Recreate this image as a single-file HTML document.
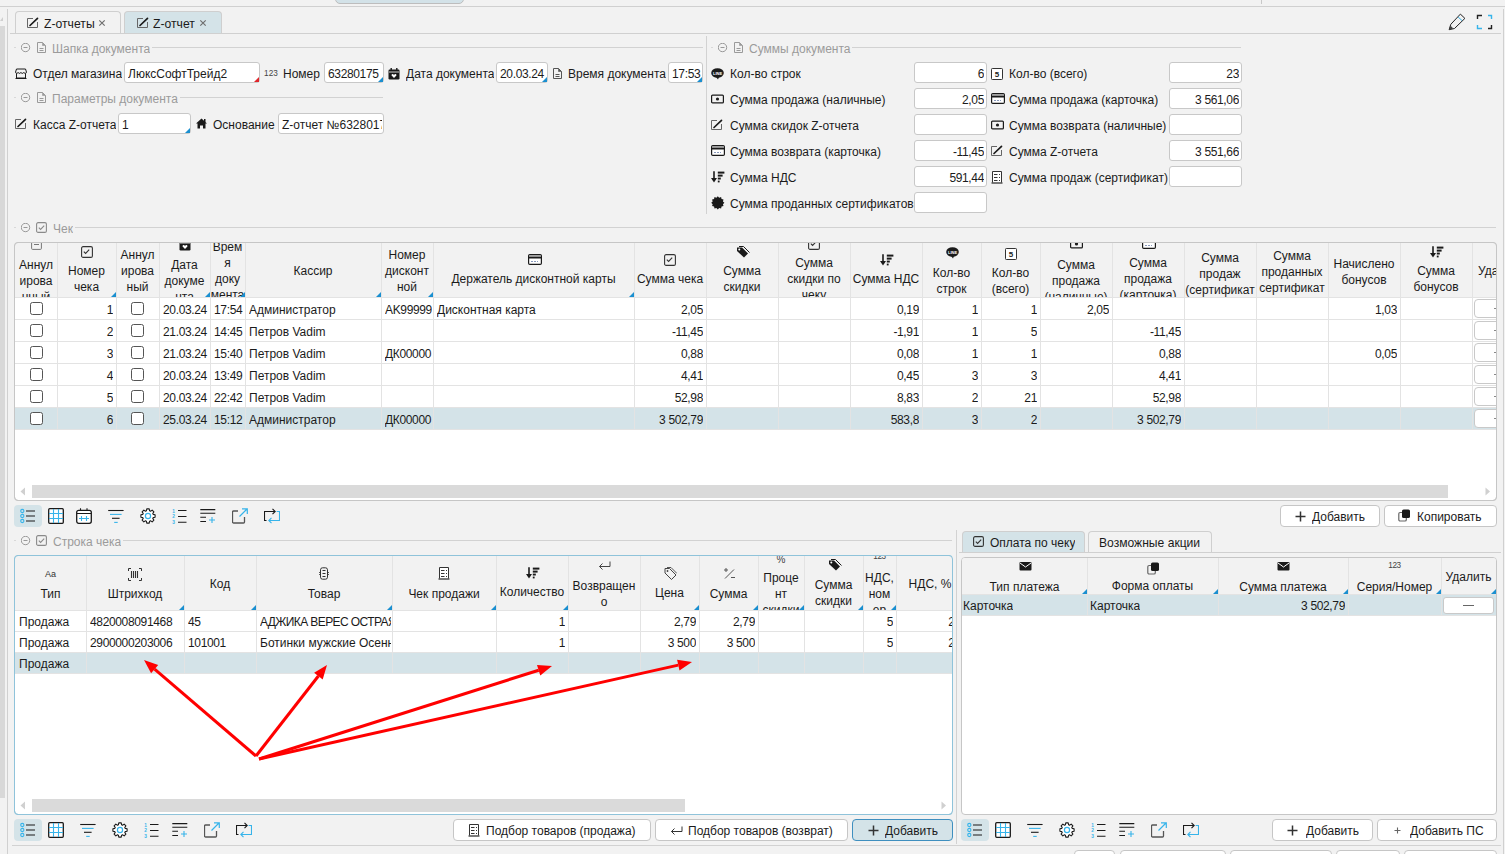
<!DOCTYPE html><html><head><meta charset="utf-8"><style>
*{margin:0;padding:0;box-sizing:border-box}
html,body{width:1505px;height:854px;overflow:hidden;background:#f2f2f2}
body{position:relative;font-family:"Liberation Sans",sans-serif;font-size:12px;color:#1b1b1b}
div,svg{position:absolute}
.t{white-space:nowrap;overflow:hidden}
.inp{background:#fff;border:1px solid #c8c8c8;border-radius:3px}
.btn{background:#fff;border:1px solid #c6c6c6;border-radius:4px}
</style></head><body>
<div style="left:335px;top:-6px;width:129px;height:10px;background:#d3e2e8;border:1px solid #bdbdbd;border-radius:5px"></div><div style="left:0px;top:6px;width:1505px;height:1px;background:#d0d0d0"></div><div style="left:1261px;top:0px;width:1px;height:4px;background:#c8c8c8"></div><div style="left:0px;top:26px;width:5px;height:772px;background:#d8d8d8"></div><svg style="left:0px;top:16px" width="4" height="6" viewBox="0 0 4 6"><path d="M0 5L3 1L3 5Z" fill="#cfcfcf"/></svg><div style="left:7px;top:9px;width:1px;height:845px;background:#d0d0d0"></div><div style="left:1503px;top:9px;width:1px;height:845px;background:#d0d0d0"></div><div style="left:15px;top:11px;width:106px;height:23px;background:#f2f2f2;border:1px solid #cfcfcf;border-bottom:none;border-radius:4px 4px 0 0"></div><div style="left:124px;top:11px;width:98px;height:23px;background:#d4e3e8;border:1px solid #cfcfcf;border-bottom:none;border-radius:4px 4px 0 0"></div><div style="left:10px;top:33px;width:1491px;height:1px;background:#d0d0d0"></div><svg style="left:27px;top:17px" width="12" height="12" viewBox="0 0 12 12"><path d="M6 1.5H0.5V10.5H10.5V5" fill="none" stroke="#666" stroke-width="1"/><path d="M3 8.5L10.5 1.3" stroke="#1a1a1a" stroke-width="1.7" stroke-linecap="round"/></svg><div class="t" style="left:44px;top:16px;height:16px;line-height:16px;font-size:12.2px">Z-отчеты</div><svg style="left:98px;top:19px" width="8" height="8" viewBox="0 0 8 8"><path d="M1.3 1.3L6.7 6.7M6.7 1.3L1.3 6.7" stroke="#6e6e6e" stroke-width="1.15"/></svg><svg style="left:137px;top:17px" width="12" height="12" viewBox="0 0 12 12"><path d="M6 1.5H0.5V10.5H10.5V5" fill="none" stroke="#666" stroke-width="1"/><path d="M3 8.5L10.5 1.3" stroke="#1a1a1a" stroke-width="1.7" stroke-linecap="round"/></svg><div class="t" style="left:153px;top:16px;height:16px;line-height:16px;font-size:12.2px">Z-отчет</div><svg style="left:199px;top:19px" width="8" height="8" viewBox="0 0 8 8"><path d="M1.3 1.3L6.7 6.7M6.7 1.3L1.3 6.7" stroke="#6e6e6e" stroke-width="1.15"/></svg><svg style="left:1448px;top:13px" width="19" height="18" viewBox="0 0 19 18"><path d="M1.1 16.7L2.8 11.3L12.4 1.1L16.9 5.4L6.5 15.5Z" fill="none" stroke="#222" stroke-width="1" stroke-linejoin="miter"/><path d="M10.1 4L14.1 7.6" stroke="#37b4ea" stroke-width="1"/><path d="M1.1 16.7L2.4 12.6L5.3 15.5Z" fill="#444"/></svg><svg style="left:1476px;top:13px" width="18" height="18" viewBox="0 0 18 18"><path d="M1.5 6V2.5H6" fill="none" stroke="#222" stroke-width="1.4"/><path d="M12 2.5H15.5V6" fill="none" stroke="#37b4ea" stroke-width="1.4"/><path d="M1.5 12V15.5H6" fill="none" stroke="#37b4ea" stroke-width="1.4"/><path d="M12 15.5H15.5V12" fill="none" stroke="#222" stroke-width="1.4"/></svg><div style="left:14px;top:47px;width:2px;height:1px;background:#d8d8d8"></div><svg style="left:21px;top:43px" width="10" height="10" viewBox="0 0 10 10"><circle cx="4.5" cy="4.5" r="4.2" fill="none" stroke="#8f8f8f" stroke-width="0.9"/><path d="M2.5 4.5H6.5" stroke="#8f8f8f" stroke-width="0.9"/></svg><svg style="left:36px;top:41px" width="11" height="13" viewBox="0 0 11 13"><path d="M1.5 1.5H6.5L9.5 4.5V11.5H1.5Z" fill="none" stroke="#9a9a9a" stroke-width="1"/><path d="M6.5 1.5V4.5H9.5" fill="#9a9a9a" stroke="#9a9a9a" stroke-width="0.6"/><path d="M3.5 7.5H7.5M3.5 9.5H7.5" stroke="#9a9a9a" stroke-width="1"/></svg><div class="t" style="left:52px;top:41px;height:16px;line-height:16px;color:#9b9b9b">Шапка документа</div><div style="left:152px;top:47px;width:551px;height:1px;background:#d2d2d2"></div><div style="left:711px;top:47px;width:2px;height:1px;background:#d8d8d8"></div><svg style="left:718px;top:43px" width="10" height="10" viewBox="0 0 10 10"><circle cx="4.5" cy="4.5" r="4.2" fill="none" stroke="#8f8f8f" stroke-width="0.9"/><path d="M2.5 4.5H6.5" stroke="#8f8f8f" stroke-width="0.9"/></svg><svg style="left:733px;top:41px" width="11" height="13" viewBox="0 0 11 13"><path d="M1.5 1.5H6.5L9.5 4.5V11.5H1.5Z" fill="none" stroke="#9a9a9a" stroke-width="1"/><path d="M6.5 1.5V4.5H9.5" fill="#9a9a9a" stroke="#9a9a9a" stroke-width="0.6"/><path d="M3.5 7.5H7.5M3.5 9.5H7.5" stroke="#9a9a9a" stroke-width="1"/></svg><div class="t" style="left:749px;top:41px;height:16px;line-height:16px;color:#9b9b9b">Суммы документа</div><div style="left:852px;top:47px;width:389px;height:1px;background:#d2d2d2"></div><div style="left:706px;top:36px;width:1px;height:178px;background:#d2d2d2"></div><svg style="left:15px;top:68px" width="12" height="11" viewBox="0 0 12 11"><path d="M1.5 1H10.5L11.5 4.2C11.5 5 10.8 5.4 10.2 5.4C9.5 5.4 9 5 8.8 4.4C8.6 5 8 5.4 7.3 5.4C6.6 5.4 6.1 5 5.9 4.4C5.7 5 5.2 5.4 4.5 5.4C3.8 5.4 3.3 5 3.1 4.4C2.9 5 2.4 5.4 1.8 5.4C1.2 5.4 0.5 5 0.5 4.2Z" fill="none" stroke="#1a1a1a" stroke-width="1"/><path d="M1.5 5.5V10H10.5V5.5M0.5 10.5H11.5" fill="none" stroke="#1a1a1a" stroke-width="1"/></svg><div class="t" style="left:33px;top:66px;height:16px;line-height:16px;">Отдел магазина</div><div class="inp" style="left:124px;top:62px;width:136px;height:21px"></div><div class="t" style="left:128px;top:66px;height:17px;line-height:17px;width:130px;">ЛюксСофтТрейд2</div><svg style="left:254px;top:77px" width="5" height="5" viewBox="0 0 5 5"><path d="M5 0V5H0Z" fill="#e0262b"/></svg><div class="t" style="left:264px;top:68px;height:12px;line-height:12px;letter-spacing:-0.35px;font-size:8.2px;color:#444;letter-spacing:0.1px">123</div><div class="t" style="left:283px;top:66px;height:16px;line-height:16px;">Номер</div><div class="inp" style="left:324px;top:62px;width:60px;height:21px"></div><div class="t" style="left:328px;top:66px;height:17px;line-height:17px;width:54px;letter-spacing:-0.35px;">63280175</div><svg style="left:378px;top:77px" width="5" height="5" viewBox="0 0 5 5"><path d="M5 0V5H0Z" fill="#1a8fd0"/></svg><svg style="left:388px;top:68px" width="12" height="12" viewBox="0 0 12 12"><rect x="0.5" y="1.5" width="11" height="10" rx="1.2" fill="#1a1a1a"/><rect x="2.5" y="0" width="1.4" height="3" fill="#1a1a1a"/><rect x="8.1" y="0" width="1.4" height="3" fill="#1a1a1a"/><path d="M1 4H11" stroke="#fff" stroke-width="0.8"/><path d="M6 10L3.8 7.8C3.2 7.2 3.6 6 4.6 6C5.2 6 5.6 6.4 6 6.9C6.4 6.4 6.8 6 7.4 6C8.4 6 8.8 7.2 8.2 7.8Z" fill="#fff"/></svg><div class="t" style="left:406px;top:66px;height:16px;line-height:16px;">Дата документа</div><div class="inp" style="left:496px;top:62px;width:52px;height:21px"></div><div class="t" style="left:500px;top:66px;height:17px;line-height:17px;width:46px;letter-spacing:-0.35px;">20.03.24</div><svg style="left:542px;top:77px" width="5" height="5" viewBox="0 0 5 5"><path d="M5 0V5H0Z" fill="#1a8fd0"/></svg><svg style="left:552px;top:67px" width="11" height="13" viewBox="0 0 11 13"><path d="M1.5 1.5H6.5L9.5 4.5V11.5H1.5Z" fill="none" stroke="#555" stroke-width="1"/><path d="M6.5 1.5V4.5H9.5" fill="#555" stroke="#555" stroke-width="0.6"/><path d="M3.5 7.5H7.5M3.5 9.5H7.5" stroke="#555" stroke-width="1"/></svg><div class="t" style="left:568px;top:66px;height:16px;line-height:16px;">Время документа</div><div class="inp" style="left:668px;top:62px;width:35px;height:21px"></div><div class="t" style="left:672px;top:66px;height:17px;line-height:17px;width:29px;letter-spacing:-0.35px;">17:53</div><svg style="left:697px;top:77px" width="5" height="5" viewBox="0 0 5 5"><path d="M5 0V5H0Z" fill="#1a8fd0"/></svg><div style="left:14px;top:97px;width:2px;height:1px;background:#d8d8d8"></div><svg style="left:21px;top:93px" width="10" height="10" viewBox="0 0 10 10"><circle cx="4.5" cy="4.5" r="4.2" fill="none" stroke="#8f8f8f" stroke-width="0.9"/><path d="M2.5 4.5H6.5" stroke="#8f8f8f" stroke-width="0.9"/></svg><svg style="left:36px;top:91px" width="11" height="13" viewBox="0 0 11 13"><path d="M1.5 1.5H6.5L9.5 4.5V11.5H1.5Z" fill="none" stroke="#9a9a9a" stroke-width="1"/><path d="M6.5 1.5V4.5H9.5" fill="#9a9a9a" stroke="#9a9a9a" stroke-width="0.6"/><path d="M3.5 7.5H7.5M3.5 9.5H7.5" stroke="#9a9a9a" stroke-width="1"/></svg><div class="t" style="left:52px;top:91px;height:16px;line-height:16px;color:#9b9b9b">Параметры документа</div><div style="left:180px;top:97px;width:203px;height:1px;background:#d2d2d2"></div><svg style="left:15px;top:118px" width="12" height="12" viewBox="0 0 12 12"><path d="M6 1.5H0.5V10.5H10.5V5" fill="none" stroke="#666" stroke-width="1"/><path d="M3 8.5L10.5 1.3" stroke="#1a1a1a" stroke-width="1.7" stroke-linecap="round"/></svg><div class="t" style="left:33px;top:117px;height:16px;line-height:16px;">Касса Z-отчета</div><div class="inp" style="left:118px;top:113px;width:73px;height:21px"></div><div class="t" style="left:122px;top:117px;height:17px;line-height:17px;width:67px;letter-spacing:-0.35px;">1</div><svg style="left:185px;top:128px" width="5" height="5" viewBox="0 0 5 5"><path d="M5 0V5H0Z" fill="#1a8fd0"/></svg><svg style="left:196px;top:118px" width="11" height="11" viewBox="0 0 11 11"><path d="M5.5 0.5L11 5.5H9.5V10.5H7V7.5H4V10.5H1.5V5.5H0Z" fill="#1a1a1a"/><rect x="8" y="1" width="1.5" height="3" fill="#1a1a1a"/></svg><div class="t" style="left:213px;top:117px;height:16px;line-height:16px;">Основание</div><div class="inp" style="left:278px;top:113px;width:106px;height:21px"></div><div class="t" style="left:282px;top:117px;height:17px;line-height:17px;width:100px;">Z-отчет №63280175</div><svg style="left:711px;top:68px" width="13" height="12" viewBox="0 0 13 12"><ellipse cx="6.5" cy="5" rx="6.3" ry="4.8" fill="#1a1a1a"/><path d="M5 9L7 11.5L8 9Z" fill="#1a1a1a"/><text x="6.5" y="6.6" font-size="4" fill="#fff" text-anchor="middle" font-family="Liberation Sans" font-weight="bold">LINE</text></svg><div class="t" style="left:730px;top:66px;height:16px;line-height:16px;">Кол-во строк</div><div class="inp" style="left:914px;top:62px;width:73px;height:21px"></div><div class="t" style="left:916px;top:66px;height:17px;line-height:17px;width:68px;letter-spacing:-0.35px;text-align:right">6</div><svg style="left:711px;top:94px" width="13" height="10" viewBox="0 0 13 10"><rect x="0.6" y="1.1" width="11.8" height="7.8" rx="1" fill="none" stroke="#1a1a1a" stroke-width="1.2"/><circle cx="6.5" cy="5" r="1.6" fill="#1a1a1a"/></svg><div class="t" style="left:730px;top:92px;height:16px;line-height:16px;">Сумма продажа (наличные)</div><div class="inp" style="left:914px;top:88px;width:73px;height:21px"></div><div class="t" style="left:916px;top:92px;height:17px;line-height:17px;width:68px;letter-spacing:-0.35px;text-align:right">2,05</div><svg style="left:711px;top:119px" width="12" height="12" viewBox="0 0 12 12"><path d="M6 1.5H0.5V10.5H10.5V5" fill="none" stroke="#666" stroke-width="1"/><path d="M3 8.5L10.5 1.3" stroke="#1a1a1a" stroke-width="1.7" stroke-linecap="round"/></svg><div class="t" style="left:730px;top:118px;height:16px;line-height:16px;">Сумма скидок Z-отчета</div><div class="inp" style="left:914px;top:114px;width:73px;height:21px"></div><svg style="left:711px;top:145px" width="14" height="11" viewBox="0 0 14 11"><rect x="0.6" y="0.6" width="12.8" height="9.8" rx="1.2" fill="#fff" stroke="#1a1a1a" stroke-width="1.2"/><rect x="1.2" y="1.2" width="11.6" height="1.6" fill="#999"/><rect x="1" y="2.8" width="12" height="1.7" fill="#1a1a1a"/><path d="M3 7.5H5M6 7.5H8M9 7.5H10" stroke="#8899bb" stroke-width="1"/></svg><div class="t" style="left:730px;top:144px;height:16px;line-height:16px;">Сумма возврата (карточка)</div><div class="inp" style="left:914px;top:140px;width:73px;height:21px"></div><div class="t" style="left:916px;top:144px;height:17px;line-height:17px;width:68px;letter-spacing:-0.35px;text-align:right">-11,45</div><svg style="left:711px;top:171px" width="14" height="12" viewBox="0 0 14 12"><path d="M3 0.3V9" stroke="#1a1a1a" stroke-width="1.6"/><path d="M0 7L3 11.6L6 7Z" fill="#1a1a1a"/><rect x="6.8" y="0.6" width="6.6" height="2" fill="#1a1a1a"/><rect x="6.8" y="3.6" width="4.8" height="2" fill="#1a1a1a"/><rect x="6.8" y="6.6" width="3" height="1.9" fill="#1a1a1a"/><rect x="6.8" y="9.6" width="1.8" height="1.8" fill="#1a1a1a"/></svg><div class="t" style="left:730px;top:170px;height:16px;line-height:16px;">Сумма НДС</div><div class="inp" style="left:914px;top:166px;width:73px;height:21px"></div><div class="t" style="left:916px;top:170px;height:17px;line-height:17px;width:68px;letter-spacing:-0.35px;text-align:right">591,44</div><svg style="left:711px;top:196px" width="14" height="14" viewBox="0 0 14 14"><polygon points="13.40,6.80 11.92,8.17 12.52,10.10 10.55,10.55 10.10,12.52 8.17,11.92 6.80,13.40 5.43,11.92 3.50,12.52 3.05,10.55 1.08,10.10 1.68,8.17 0.20,6.80 1.68,5.43 1.08,3.50 3.05,3.05 3.50,1.08 5.43,1.68 6.80,0.20 8.17,1.68 10.10,1.08 10.55,3.05 12.52,3.50 11.92,5.43" fill="#1a1a1a"/></svg><div class="t" style="left:730px;top:196px;height:16px;line-height:16px;">Сумма проданных сертификатов</div><div class="inp" style="left:914px;top:192px;width:73px;height:21px"></div><svg style="left:991px;top:67px" width="13" height="13" viewBox="0 0 13 13"><rect x="0.5" y="1.5" width="11" height="11" rx="0.8" fill="#fff" stroke="#333" stroke-width="1"/><text x="6" y="9.8" font-size="8" text-anchor="middle" fill="#222" font-family="Liberation Sans" font-weight="bold">5</text></svg><div class="t" style="left:1009px;top:66px;height:16px;line-height:16px;">Кол-во (всего)</div><div class="inp" style="left:1169px;top:62px;width:73px;height:21px"></div><div class="t" style="left:1171px;top:66px;height:17px;line-height:17px;width:68px;letter-spacing:-0.35px;text-align:right">23</div><svg style="left:991px;top:93px" width="14" height="11" viewBox="0 0 14 11"><rect x="0.6" y="0.6" width="12.8" height="9.8" rx="1.2" fill="#fff" stroke="#1a1a1a" stroke-width="1.2"/><rect x="1.2" y="1.2" width="11.6" height="1.6" fill="#999"/><rect x="1" y="2.8" width="12" height="1.7" fill="#1a1a1a"/><path d="M3 7.5H5M6 7.5H8M9 7.5H10" stroke="#8899bb" stroke-width="1"/></svg><div class="t" style="left:1009px;top:92px;height:16px;line-height:16px;">Сумма продажа (карточка)</div><div class="inp" style="left:1169px;top:88px;width:73px;height:21px"></div><div class="t" style="left:1171px;top:92px;height:17px;line-height:17px;width:68px;letter-spacing:-0.35px;text-align:right">3 561,06</div><svg style="left:991px;top:120px" width="13" height="10" viewBox="0 0 13 10"><rect x="0.6" y="1.1" width="11.8" height="7.8" rx="1" fill="none" stroke="#1a1a1a" stroke-width="1.2"/><circle cx="6.5" cy="5" r="1.6" fill="#1a1a1a"/></svg><div class="t" style="left:1009px;top:118px;height:16px;line-height:16px;">Сумма возврата (наличные)</div><div class="inp" style="left:1169px;top:114px;width:73px;height:21px"></div><svg style="left:991px;top:145px" width="12" height="12" viewBox="0 0 12 12"><path d="M6 1.5H0.5V10.5H10.5V5" fill="none" stroke="#666" stroke-width="1"/><path d="M3 8.5L10.5 1.3" stroke="#1a1a1a" stroke-width="1.7" stroke-linecap="round"/></svg><div class="t" style="left:1009px;top:144px;height:16px;line-height:16px;">Сумма Z-отчета</div><div class="inp" style="left:1169px;top:140px;width:73px;height:21px"></div><div class="t" style="left:1171px;top:144px;height:17px;line-height:17px;width:68px;letter-spacing:-0.35px;text-align:right">3 551,66</div><svg style="left:991px;top:171px" width="12" height="13" viewBox="0 0 12 13"><path d="M1.5 11.5V0.5H10.5V11.5" fill="#fff" stroke="#333" stroke-width="1"/><path d="M0.5 12H11.5" stroke="#333" stroke-width="1.3"/><path d="M3 3.5H6.5M8 3.5H9M3 6.5H6.5M8 6.5H9M3 9.5H6.5M8 9.5H9" stroke="#333" stroke-width="1.1"/></svg><div class="t" style="left:1009px;top:170px;height:16px;line-height:16px;">Сумма продаж (сертификат)</div><div class="inp" style="left:1169px;top:166px;width:73px;height:21px"></div><div style="left:14px;top:227px;width:2px;height:1px;background:#d8d8d8"></div><svg style="left:21px;top:223px" width="10" height="10" viewBox="0 0 10 10"><circle cx="4.5" cy="4.5" r="4.2" fill="none" stroke="#8f8f8f" stroke-width="0.9"/><path d="M2.5 4.5H6.5" stroke="#8f8f8f" stroke-width="0.9"/></svg><svg style="left:36px;top:222px" width="11" height="11" viewBox="0 0 11 11"><rect x="0.6" y="0.6" width="9.8" height="9.8" rx="1.5" fill="none" stroke="#8a8a8a" stroke-width="1.1"/><path d="M2.8 5.6L4.6 7.4L8.2 3.6" fill="none" stroke="#8a8a8a" stroke-width="1.1"/></svg><div class="t" style="left:53px;top:221px;height:16px;line-height:16px;color:#9b9b9b">Чек</div><div style="left:75px;top:227px;width:1421px;height:1px;background:#d2d2d2"></div><div style="left:0;top:0;width:1505px;height:854px;clip-path:inset(242px 8px 353px 14px)"><div style="left:14px;top:242px;width:1483px;height:259px;background:#fff;border:1px solid #c6c6c6;border-radius:4px"></div><div style="left:15px;top:243px;width:1481px;height:54px;background:#f2f2f2;border-radius:3px 3px 0 0"></div><div style="left:15px;top:408px;width:1481px;height:22px;background:#d4e3e8"></div><div style="left:15px;top:297px;width:1481px;height:1px;background:#e3e3e3"></div><div style="left:15px;top:319px;width:1481px;height:1px;background:#e3e3e3"></div><div style="left:15px;top:341px;width:1481px;height:1px;background:#e3e3e3"></div><div style="left:15px;top:363px;width:1481px;height:1px;background:#e3e3e3"></div><div style="left:15px;top:385px;width:1481px;height:1px;background:#e3e3e3"></div><div style="left:15px;top:407px;width:1481px;height:1px;background:#e3e3e3"></div><div style="left:15px;top:429px;width:1481px;height:1px;background:#e3e3e3"></div><div style="left:57px;top:243px;width:1px;height:186px;background:#e3e3e3"></div><div style="left:116px;top:243px;width:1px;height:186px;background:#e3e3e3"></div><div style="left:159px;top:243px;width:1px;height:186px;background:#e3e3e3"></div><div style="left:210px;top:243px;width:1px;height:186px;background:#e3e3e3"></div><div style="left:245px;top:243px;width:1px;height:186px;background:#e3e3e3"></div><div style="left:381px;top:243px;width:1px;height:186px;background:#e3e3e3"></div><div style="left:433px;top:243px;width:1px;height:186px;background:#e3e3e3"></div><div style="left:634px;top:243px;width:1px;height:186px;background:#e3e3e3"></div><div style="left:706px;top:243px;width:1px;height:186px;background:#e3e3e3"></div><div style="left:778px;top:243px;width:1px;height:186px;background:#e3e3e3"></div><div style="left:850px;top:243px;width:1px;height:186px;background:#e3e3e3"></div><div style="left:922px;top:243px;width:1px;height:186px;background:#e3e3e3"></div><div style="left:981px;top:243px;width:1px;height:186px;background:#e3e3e3"></div><div style="left:1040px;top:243px;width:1px;height:186px;background:#e3e3e3"></div><div style="left:1112px;top:243px;width:1px;height:186px;background:#e3e3e3"></div><div style="left:1184px;top:243px;width:1px;height:186px;background:#e3e3e3"></div><div style="left:1256px;top:243px;width:1px;height:186px;background:#e3e3e3"></div><div style="left:1328px;top:243px;width:1px;height:186px;background:#e3e3e3"></div><div style="left:1400px;top:243px;width:1px;height:186px;background:#e3e3e3"></div><div style="left:1472px;top:243px;width:1px;height:186px;background:#e3e3e3"></div><div style="left:30px;top:302px;width:13px;height:13px;background:#fff;border:1px solid #555;border-radius:2.5px"></div><div class="t" style="left:58px;top:302px;height:17px;line-height:17px;width:55px;letter-spacing:-0.35px;text-align:right">1</div><div style="left:131px;top:302px;width:13px;height:13px;background:#fff;border:1px solid #555;border-radius:2.5px"></div><div class="t" style="left:163px;top:302px;height:17px;line-height:17px;width:46px;letter-spacing:-0.35px;">20.03.24</div><div class="t" style="left:214px;top:302px;height:17px;line-height:17px;width:30px;letter-spacing:-0.35px;">17:54</div><div class="t" style="left:249px;top:302px;height:17px;line-height:17px;width:131px;">Администратор</div><div class="t" style="left:385px;top:302px;height:17px;line-height:17px;width:47px;letter-spacing:-0.35px;">AK99999</div><div class="t" style="left:437px;top:302px;height:17px;line-height:17px;width:196px;">Дисконтная карта</div><div class="t" style="left:635px;top:302px;height:17px;line-height:17px;width:68px;letter-spacing:-0.35px;text-align:right">2,05</div><div class="t" style="left:851px;top:302px;height:17px;line-height:17px;width:68px;letter-spacing:-0.35px;text-align:right">0,19</div><div class="t" style="left:923px;top:302px;height:17px;line-height:17px;width:55px;letter-spacing:-0.35px;text-align:right">1</div><div class="t" style="left:982px;top:302px;height:17px;line-height:17px;width:55px;letter-spacing:-0.35px;text-align:right">1</div><div class="t" style="left:1041px;top:302px;height:17px;line-height:17px;width:68px;letter-spacing:-0.35px;text-align:right">2,05</div><div class="t" style="left:1329px;top:302px;height:17px;line-height:17px;width:68px;letter-spacing:-0.35px;text-align:right">1,03</div><div style="left:1474px;top:299px;width:30px;height:19px;background:#fff;border:1px solid #c9c9c9;border-radius:4px"></div><div style="left:1494px;top:308px;width:3px;height:1px;background:#888"></div><div style="left:30px;top:324px;width:13px;height:13px;background:#fff;border:1px solid #555;border-radius:2.5px"></div><div class="t" style="left:58px;top:324px;height:17px;line-height:17px;width:55px;letter-spacing:-0.35px;text-align:right">2</div><div style="left:131px;top:324px;width:13px;height:13px;background:#fff;border:1px solid #555;border-radius:2.5px"></div><div class="t" style="left:163px;top:324px;height:17px;line-height:17px;width:46px;letter-spacing:-0.35px;">21.03.24</div><div class="t" style="left:214px;top:324px;height:17px;line-height:17px;width:30px;letter-spacing:-0.35px;">14:45</div><div class="t" style="left:249px;top:324px;height:17px;line-height:17px;width:131px;">Петров Vadim</div><div class="t" style="left:635px;top:324px;height:17px;line-height:17px;width:68px;letter-spacing:-0.35px;text-align:right">-11,45</div><div class="t" style="left:851px;top:324px;height:17px;line-height:17px;width:68px;letter-spacing:-0.35px;text-align:right">-1,91</div><div class="t" style="left:923px;top:324px;height:17px;line-height:17px;width:55px;letter-spacing:-0.35px;text-align:right">1</div><div class="t" style="left:982px;top:324px;height:17px;line-height:17px;width:55px;letter-spacing:-0.35px;text-align:right">5</div><div class="t" style="left:1113px;top:324px;height:17px;line-height:17px;width:68px;letter-spacing:-0.35px;text-align:right">-11,45</div><div style="left:1474px;top:321px;width:30px;height:19px;background:#fff;border:1px solid #c9c9c9;border-radius:4px"></div><div style="left:1494px;top:330px;width:3px;height:1px;background:#888"></div><div style="left:30px;top:346px;width:13px;height:13px;background:#fff;border:1px solid #555;border-radius:2.5px"></div><div class="t" style="left:58px;top:346px;height:17px;line-height:17px;width:55px;letter-spacing:-0.35px;text-align:right">3</div><div style="left:131px;top:346px;width:13px;height:13px;background:#fff;border:1px solid #555;border-radius:2.5px"></div><div class="t" style="left:163px;top:346px;height:17px;line-height:17px;width:46px;letter-spacing:-0.35px;">21.03.24</div><div class="t" style="left:214px;top:346px;height:17px;line-height:17px;width:30px;letter-spacing:-0.35px;">15:40</div><div class="t" style="left:249px;top:346px;height:17px;line-height:17px;width:131px;">Петров Vadim</div><div class="t" style="left:385px;top:346px;height:17px;line-height:17px;width:47px;letter-spacing:-0.35px;">ДК00000</div><div class="t" style="left:635px;top:346px;height:17px;line-height:17px;width:68px;letter-spacing:-0.35px;text-align:right">0,88</div><div class="t" style="left:851px;top:346px;height:17px;line-height:17px;width:68px;letter-spacing:-0.35px;text-align:right">0,08</div><div class="t" style="left:923px;top:346px;height:17px;line-height:17px;width:55px;letter-spacing:-0.35px;text-align:right">1</div><div class="t" style="left:982px;top:346px;height:17px;line-height:17px;width:55px;letter-spacing:-0.35px;text-align:right">1</div><div class="t" style="left:1113px;top:346px;height:17px;line-height:17px;width:68px;letter-spacing:-0.35px;text-align:right">0,88</div><div class="t" style="left:1329px;top:346px;height:17px;line-height:17px;width:68px;letter-spacing:-0.35px;text-align:right">0,05</div><div style="left:1474px;top:343px;width:30px;height:19px;background:#fff;border:1px solid #c9c9c9;border-radius:4px"></div><div style="left:1494px;top:352px;width:3px;height:1px;background:#888"></div><div style="left:30px;top:368px;width:13px;height:13px;background:#fff;border:1px solid #555;border-radius:2.5px"></div><div class="t" style="left:58px;top:368px;height:17px;line-height:17px;width:55px;letter-spacing:-0.35px;text-align:right">4</div><div style="left:131px;top:368px;width:13px;height:13px;background:#fff;border:1px solid #555;border-radius:2.5px"></div><div class="t" style="left:163px;top:368px;height:17px;line-height:17px;width:46px;letter-spacing:-0.35px;">20.03.24</div><div class="t" style="left:214px;top:368px;height:17px;line-height:17px;width:30px;letter-spacing:-0.35px;">13:49</div><div class="t" style="left:249px;top:368px;height:17px;line-height:17px;width:131px;">Петров Vadim</div><div class="t" style="left:635px;top:368px;height:17px;line-height:17px;width:68px;letter-spacing:-0.35px;text-align:right">4,41</div><div class="t" style="left:851px;top:368px;height:17px;line-height:17px;width:68px;letter-spacing:-0.35px;text-align:right">0,45</div><div class="t" style="left:923px;top:368px;height:17px;line-height:17px;width:55px;letter-spacing:-0.35px;text-align:right">3</div><div class="t" style="left:982px;top:368px;height:17px;line-height:17px;width:55px;letter-spacing:-0.35px;text-align:right">3</div><div class="t" style="left:1113px;top:368px;height:17px;line-height:17px;width:68px;letter-spacing:-0.35px;text-align:right">4,41</div><div style="left:1474px;top:365px;width:30px;height:19px;background:#fff;border:1px solid #c9c9c9;border-radius:4px"></div><div style="left:1494px;top:374px;width:3px;height:1px;background:#888"></div><div style="left:30px;top:390px;width:13px;height:13px;background:#fff;border:1px solid #555;border-radius:2.5px"></div><div class="t" style="left:58px;top:390px;height:17px;line-height:17px;width:55px;letter-spacing:-0.35px;text-align:right">5</div><div style="left:131px;top:390px;width:13px;height:13px;background:#fff;border:1px solid #555;border-radius:2.5px"></div><div class="t" style="left:163px;top:390px;height:17px;line-height:17px;width:46px;letter-spacing:-0.35px;">20.03.24</div><div class="t" style="left:214px;top:390px;height:17px;line-height:17px;width:30px;letter-spacing:-0.35px;">22:42</div><div class="t" style="left:249px;top:390px;height:17px;line-height:17px;width:131px;">Петров Vadim</div><div class="t" style="left:635px;top:390px;height:17px;line-height:17px;width:68px;letter-spacing:-0.35px;text-align:right">52,98</div><div class="t" style="left:851px;top:390px;height:17px;line-height:17px;width:68px;letter-spacing:-0.35px;text-align:right">8,83</div><div class="t" style="left:923px;top:390px;height:17px;line-height:17px;width:55px;letter-spacing:-0.35px;text-align:right">2</div><div class="t" style="left:982px;top:390px;height:17px;line-height:17px;width:55px;letter-spacing:-0.35px;text-align:right">21</div><div class="t" style="left:1113px;top:390px;height:17px;line-height:17px;width:68px;letter-spacing:-0.35px;text-align:right">52,98</div><div style="left:1474px;top:387px;width:30px;height:19px;background:#fff;border:1px solid #c9c9c9;border-radius:4px"></div><div style="left:1494px;top:396px;width:3px;height:1px;background:#888"></div><div style="left:30px;top:412px;width:13px;height:13px;background:#fff;border:1px solid #555;border-radius:2.5px"></div><div class="t" style="left:58px;top:412px;height:17px;line-height:17px;width:55px;letter-spacing:-0.35px;text-align:right">6</div><div style="left:131px;top:412px;width:13px;height:13px;background:#fff;border:1px solid #555;border-radius:2.5px"></div><div class="t" style="left:163px;top:412px;height:17px;line-height:17px;width:46px;letter-spacing:-0.35px;">25.03.24</div><div class="t" style="left:214px;top:412px;height:17px;line-height:17px;width:30px;letter-spacing:-0.35px;">15:12</div><div class="t" style="left:249px;top:412px;height:17px;line-height:17px;width:131px;">Администратор</div><div class="t" style="left:385px;top:412px;height:17px;line-height:17px;width:47px;letter-spacing:-0.35px;">ДК00000</div><div class="t" style="left:635px;top:412px;height:17px;line-height:17px;width:68px;letter-spacing:-0.35px;text-align:right">3 502,79</div><div class="t" style="left:851px;top:412px;height:17px;line-height:17px;width:68px;letter-spacing:-0.35px;text-align:right">583,8</div><div class="t" style="left:923px;top:412px;height:17px;line-height:17px;width:55px;letter-spacing:-0.35px;text-align:right">3</div><div class="t" style="left:982px;top:412px;height:17px;line-height:17px;width:55px;letter-spacing:-0.35px;text-align:right">2</div><div class="t" style="left:1113px;top:412px;height:17px;line-height:17px;width:68px;letter-spacing:-0.35px;text-align:right">3 502,79</div><div style="left:1474px;top:409px;width:30px;height:19px;background:#fff;border:1px solid #c9c9c9;border-radius:4px"></div><div style="left:1494px;top:418px;width:3px;height:1px;background:#888"></div><div style="left:15px;top:243px;width:42px;height:54px;overflow:hidden"><svg style="left:16.0px;top:-4.0px" width="11" height="11" viewBox="0 0 11 11"><rect x="0.6" y="0.6" width="9.8" height="9.8" rx="1" fill="none" stroke="#777" stroke-width="1"/><path d="M3 5.5H8" stroke="#777" stroke-width="1"/></svg><div class="t" style="left:0;width:42px;top:14.0px;height:16px;line-height:16px;text-align:center;color:#1b1b1b">Аннул</div><div class="t" style="left:0;width:42px;top:30.0px;height:16px;line-height:16px;text-align:center;color:#1b1b1b">ирова</div><div class="t" style="left:0;width:42px;top:46.0px;height:16px;line-height:16px;text-align:center;color:#1b1b1b">нный</div></div><div style="left:57px;top:243px;width:59px;height:54px;overflow:hidden"><svg style="left:23.5px;top:3.0px" width="12" height="12" viewBox="0 0 12 12"><rect x="0.6" y="0.6" width="10.8" height="10.8" rx="1.5" fill="none" stroke="#333" stroke-width="1.1"/><path d="M2.8 5.6L4.6 7.4L8.2 3.6" fill="none" stroke="#333" stroke-width="1.1"/></svg><div class="t" style="left:0;width:59px;top:20.0px;height:16px;line-height:16px;text-align:center;color:#1b1b1b">Номер</div><div class="t" style="left:0;width:59px;top:36.0px;height:16px;line-height:16px;text-align:center;color:#1b1b1b">чека</div></div><svg style="left:111px;top:292px" width="5" height="5" viewBox="0 0 5 5"><path d="M5 0V5H0Z" fill="#1a8fd0"/></svg><div style="left:116px;top:243px;width:43px;height:54px;overflow:hidden"><div class="t" style="left:0;width:43px;top:4.0px;height:16px;line-height:16px;text-align:center;color:#1b1b1b">Аннул</div><div class="t" style="left:0;width:43px;top:20.0px;height:16px;line-height:16px;text-align:center;color:#1b1b1b">ирова</div><div class="t" style="left:0;width:43px;top:36.0px;height:16px;line-height:16px;text-align:center;color:#1b1b1b">ный</div></div><div style="left:159px;top:243px;width:51px;height:54px;overflow:hidden"><svg style="left:19.5px;top:-4.0px" width="12" height="12" viewBox="0 0 12 12"><rect x="0.5" y="1.5" width="11" height="10" rx="1.2" fill="#1a1a1a"/><rect x="2.5" y="0" width="1.4" height="3" fill="#1a1a1a"/><rect x="8.1" y="0" width="1.4" height="3" fill="#1a1a1a"/><path d="M1 4H11" stroke="#fff" stroke-width="0.8"/><path d="M6 10L3.8 7.8C3.2 7.2 3.6 6 4.6 6C5.2 6 5.6 6.4 6 6.9C6.4 6.4 6.8 6 7.4 6C8.4 6 8.8 7.2 8.2 7.8Z" fill="#fff"/></svg><div class="t" style="left:0;width:51px;top:14.0px;height:16px;line-height:16px;text-align:center;color:#1b1b1b">Дата</div><div class="t" style="left:0;width:51px;top:30.0px;height:16px;line-height:16px;text-align:center;color:#1b1b1b">докуме</div><div class="t" style="left:0;width:51px;top:46.0px;height:16px;line-height:16px;text-align:center;color:#1b1b1b">нта</div></div><svg style="left:205px;top:292px" width="5" height="5" viewBox="0 0 5 5"><path d="M5 0V5H0Z" fill="#1a8fd0"/></svg><div style="left:210px;top:243px;width:35px;height:54px;overflow:hidden"><div class="t" style="left:0;width:35px;top:-4.0px;height:16px;line-height:16px;text-align:center;color:#1b1b1b">Врем</div><div class="t" style="left:0;width:35px;top:12.0px;height:16px;line-height:16px;text-align:center;color:#1b1b1b">я</div><div class="t" style="left:0;width:35px;top:28.0px;height:16px;line-height:16px;text-align:center;color:#1b1b1b">доку</div><div class="t" style="left:0;width:35px;top:44.0px;height:16px;line-height:16px;text-align:center;color:#1b1b1b">мента</div></div><svg style="left:240px;top:292px" width="5" height="5" viewBox="0 0 5 5"><path d="M5 0V5H0Z" fill="#1a8fd0"/></svg><div style="left:245px;top:243px;width:136px;height:54px;overflow:hidden"><div class="t" style="left:0;width:136px;top:20.0px;height:16px;line-height:16px;text-align:center;color:#1b1b1b">Кассир</div></div><svg style="left:376px;top:292px" width="5" height="5" viewBox="0 0 5 5"><path d="M5 0V5H0Z" fill="#1a8fd0"/></svg><div style="left:381px;top:243px;width:52px;height:54px;overflow:hidden"><div class="t" style="left:0;width:52px;top:4.0px;height:16px;line-height:16px;text-align:center;color:#1b1b1b">Номер</div><div class="t" style="left:0;width:52px;top:20.0px;height:16px;line-height:16px;text-align:center;color:#1b1b1b">дисконт</div><div class="t" style="left:0;width:52px;top:36.0px;height:16px;line-height:16px;text-align:center;color:#1b1b1b">ной</div></div><svg style="left:428px;top:292px" width="5" height="5" viewBox="0 0 5 5"><path d="M5 0V5H0Z" fill="#1a8fd0"/></svg><div style="left:433px;top:243px;width:201px;height:54px;overflow:hidden"><svg style="left:94.5px;top:11.0px" width="14" height="11" viewBox="0 0 14 11"><rect x="0.6" y="0.6" width="12.8" height="9.8" rx="1.2" fill="#fff" stroke="#1a1a1a" stroke-width="1.2"/><rect x="1.2" y="1.2" width="11.6" height="1.6" fill="#999"/><rect x="1" y="2.8" width="12" height="1.7" fill="#1a1a1a"/><path d="M3 7.5H5M6 7.5H8M9 7.5H10" stroke="#8899bb" stroke-width="1"/></svg><div class="t" style="left:0;width:201px;top:28.0px;height:16px;line-height:16px;text-align:center;color:#1b1b1b">Держатель дисконтной карты</div></div><svg style="left:629px;top:292px" width="5" height="5" viewBox="0 0 5 5"><path d="M5 0V5H0Z" fill="#1a8fd0"/></svg><div style="left:634px;top:243px;width:72px;height:54px;overflow:hidden"><svg style="left:30.0px;top:11.0px" width="12" height="12" viewBox="0 0 12 12"><rect x="0.6" y="0.6" width="10.8" height="10.8" rx="1.5" fill="none" stroke="#333" stroke-width="1.1"/><path d="M2.8 5.6L4.6 7.4L8.2 3.6" fill="none" stroke="#333" stroke-width="1.1"/></svg><div class="t" style="left:0;width:72px;top:28.0px;height:16px;line-height:16px;text-align:center;color:#1b1b1b">Сумма чека</div></div><div style="left:706px;top:243px;width:72px;height:54px;overflow:hidden"><svg style="left:30.0px;top:3.0px" width="14" height="12" viewBox="0 0 14 12"><path d="M1 1.5H6L12 7.5L8 11.5L1 5Z" fill="#1a1a1a"/><path d="M3 0.5H7.5L13.5 6.5" fill="none" stroke="#1a1a1a" stroke-width="1"/><circle cx="3.3" cy="3.6" r="1" fill="#fff"/></svg><div class="t" style="left:0;width:72px;top:20.0px;height:16px;line-height:16px;text-align:center;color:#1b1b1b">Сумма</div><div class="t" style="left:0;width:72px;top:36.0px;height:16px;line-height:16px;text-align:center;color:#1b1b1b">скидки</div></div><div style="left:778px;top:243px;width:72px;height:54px;overflow:hidden"><svg style="left:30.0px;top:-5.0px" width="12" height="12" viewBox="0 0 12 12"><rect x="0.6" y="0.6" width="10.8" height="10.8" rx="1.5" fill="none" stroke="#333" stroke-width="1.1"/><path d="M2.8 5.6L4.6 7.4L8.2 3.6" fill="none" stroke="#333" stroke-width="1.1"/></svg><div class="t" style="left:0;width:72px;top:12.0px;height:16px;line-height:16px;text-align:center;color:#1b1b1b">Сумма</div><div class="t" style="left:0;width:72px;top:28.0px;height:16px;line-height:16px;text-align:center;color:#1b1b1b">скидки по</div><div class="t" style="left:0;width:72px;top:44.0px;height:16px;line-height:16px;text-align:center;color:#1b1b1b">чеку</div></div><div style="left:850px;top:243px;width:72px;height:54px;overflow:hidden"><svg style="left:30.0px;top:11.0px" width="14" height="12" viewBox="0 0 14 12"><path d="M3 0.3V9" stroke="#1a1a1a" stroke-width="1.6"/><path d="M0 7L3 11.6L6 7Z" fill="#1a1a1a"/><rect x="6.8" y="0.6" width="6.6" height="2" fill="#1a1a1a"/><rect x="6.8" y="3.6" width="4.8" height="2" fill="#1a1a1a"/><rect x="6.8" y="6.6" width="3" height="1.9" fill="#1a1a1a"/><rect x="6.8" y="9.6" width="1.8" height="1.8" fill="#1a1a1a"/></svg><div class="t" style="left:0;width:72px;top:28.0px;height:16px;line-height:16px;text-align:center;color:#1b1b1b">Сумма НДС</div></div><div style="left:922px;top:243px;width:59px;height:54px;overflow:hidden"><svg style="left:23.5px;top:4.0px" width="13" height="12" viewBox="0 0 13 12"><ellipse cx="6.5" cy="5" rx="6.3" ry="4.8" fill="#1a1a1a"/><path d="M5 9L7 11.5L8 9Z" fill="#1a1a1a"/><text x="6.5" y="6.6" font-size="4" fill="#fff" text-anchor="middle" font-family="Liberation Sans" font-weight="bold">LINE</text></svg><div class="t" style="left:0;width:59px;top:22.0px;height:16px;line-height:16px;text-align:center;color:#1b1b1b">Кол-во</div><div class="t" style="left:0;width:59px;top:38.0px;height:16px;line-height:16px;text-align:center;color:#1b1b1b">строк</div></div><div style="left:981px;top:243px;width:59px;height:54px;overflow:hidden"><svg style="left:23.5px;top:4.0px" width="13" height="13" viewBox="0 0 13 13"><rect x="0.5" y="1.5" width="11" height="11" rx="0.8" fill="#fff" stroke="#333" stroke-width="1"/><text x="6" y="9.8" font-size="8" text-anchor="middle" fill="#222" font-family="Liberation Sans" font-weight="bold">5</text></svg><div class="t" style="left:0;width:59px;top:22.0px;height:16px;line-height:16px;text-align:center;color:#1b1b1b">Кол-во</div><div class="t" style="left:0;width:59px;top:38.0px;height:16px;line-height:16px;text-align:center;color:#1b1b1b">(всего)</div></div><div style="left:1040px;top:243px;width:72px;height:54px;overflow:hidden"><svg style="left:30.0px;top:-4.0px" width="13" height="10" viewBox="0 0 13 10"><rect x="0.6" y="1.1" width="11.8" height="7.8" rx="1" fill="none" stroke="#1a1a1a" stroke-width="1.2"/><circle cx="6.5" cy="5" r="1.6" fill="#1a1a1a"/></svg><div class="t" style="left:0;width:72px;top:14.0px;height:16px;line-height:16px;text-align:center;color:#1b1b1b">Сумма</div><div class="t" style="left:0;width:72px;top:30.0px;height:16px;line-height:16px;text-align:center;color:#1b1b1b">продажа</div><div class="t" style="left:0;width:72px;top:46.0px;height:16px;line-height:16px;text-align:center;color:#1b1b1b">(наличные)</div></div><div style="left:1112px;top:243px;width:72px;height:54px;overflow:hidden"><svg style="left:30.0px;top:-5.0px" width="14" height="11" viewBox="0 0 14 11"><rect x="0.6" y="0.6" width="12.8" height="9.8" rx="1.2" fill="#fff" stroke="#1a1a1a" stroke-width="1.2"/><rect x="1.2" y="1.2" width="11.6" height="1.6" fill="#999"/><rect x="1" y="2.8" width="12" height="1.7" fill="#1a1a1a"/><path d="M3 7.5H5M6 7.5H8M9 7.5H10" stroke="#8899bb" stroke-width="1"/></svg><div class="t" style="left:0;width:72px;top:12.0px;height:16px;line-height:16px;text-align:center;color:#1b1b1b">Сумма</div><div class="t" style="left:0;width:72px;top:28.0px;height:16px;line-height:16px;text-align:center;color:#1b1b1b">продажа</div><div class="t" style="left:0;width:72px;top:44.0px;height:16px;line-height:16px;text-align:center;color:#1b1b1b">(карточка)</div></div><div style="left:1184px;top:243px;width:72px;height:54px;overflow:hidden"><div class="t" style="left:0;width:72px;top:7.0px;height:16px;line-height:16px;text-align:center;color:#1b1b1b">Сумма</div><div class="t" style="left:0;width:72px;top:23.0px;height:16px;line-height:16px;text-align:center;color:#1b1b1b">продаж</div><div class="t" style="left:0;width:72px;top:39.0px;height:16px;line-height:16px;text-align:center;color:#1b1b1b">(сертификат</div></div><div style="left:1256px;top:243px;width:72px;height:54px;overflow:hidden"><div class="t" style="left:0;width:72px;top:5.0px;height:16px;line-height:16px;text-align:center;color:#1b1b1b">Сумма</div><div class="t" style="left:0;width:72px;top:21.0px;height:16px;line-height:16px;text-align:center;color:#1b1b1b">проданных</div><div class="t" style="left:0;width:72px;top:37.0px;height:16px;line-height:16px;text-align:center;color:#1b1b1b">сертификат</div></div><div style="left:1328px;top:243px;width:72px;height:54px;overflow:hidden"><div class="t" style="left:0;width:72px;top:13.0px;height:16px;line-height:16px;text-align:center;color:#1b1b1b">Начислено</div><div class="t" style="left:0;width:72px;top:29.0px;height:16px;line-height:16px;text-align:center;color:#1b1b1b">бонусов</div></div><div style="left:1400px;top:243px;width:72px;height:54px;overflow:hidden"><svg style="left:30.0px;top:3.0px" width="14" height="12" viewBox="0 0 14 12"><path d="M3 0.3V9" stroke="#1a1a1a" stroke-width="1.6"/><path d="M0 7L3 11.6L6 7Z" fill="#1a1a1a"/><rect x="6.8" y="0.6" width="6.6" height="2" fill="#1a1a1a"/><rect x="6.8" y="3.6" width="4.8" height="2" fill="#1a1a1a"/><rect x="6.8" y="6.6" width="3" height="1.9" fill="#1a1a1a"/><rect x="6.8" y="9.6" width="1.8" height="1.8" fill="#1a1a1a"/></svg><div class="t" style="left:0;width:72px;top:20.0px;height:16px;line-height:16px;text-align:center;color:#1b1b1b">Сумма</div><div class="t" style="left:0;width:72px;top:36.0px;height:16px;line-height:16px;text-align:center;color:#1b1b1b">бонусов</div></div><div class="t" style="left:1478px;top:263px;height:16px;line-height:16px;width:18px;">Уда</div><div style="left:32px;top:485px;width:1416px;height:13px;background:#dadada"></div><svg style="left:20px;top:487px" width="6" height="9" viewBox="0 0 6 9"><path d="M5 0.5V8.5L0.5 4.5Z" fill="#d0d0d0"/></svg><svg style="left:1485px;top:487px" width="6" height="9" viewBox="0 0 6 9"><path d="M0.5 0.5V8.5L5 4.5Z" fill="#d0d0d0"/></svg></div><div style="left:14px;top:242px;width:1483px;height:259px;border:1px solid #c6c6c6;border-radius:4px"></div><div style="left:14px;top:505px;width:28px;height:22px;background:#d4e3e8;border-radius:4px"></div><svg style="left:20px;top:508px" width="16" height="16" viewBox="0 0 16 16"><circle cx="2.3" cy="3" r="1.6" fill="none" stroke="#37b4ea" stroke-width="1.1"/><circle cx="2.3" cy="8" r="1.6" fill="none" stroke="#37b4ea" stroke-width="1.1"/><circle cx="2.3" cy="13" r="1.6" fill="none" stroke="#37b4ea" stroke-width="1.1"/><path d="M6 3H15M6 8H15M6 13H15" stroke="#1a1a1a" stroke-width="1.2"/></svg><svg style="left:48px;top:508px" width="16" height="16" viewBox="0 0 16 16"><rect x="0.7" y="0.7" width="14.6" height="14.6" rx="1" fill="#fff" stroke="#1a1a1a" stroke-width="1.3"/><path d="M5.5 1V15M10.5 1V15M1 5.5H15M1 10.5H15" stroke="#37b4ea" stroke-width="1.1"/></svg><svg style="left:76px;top:508px" width="16" height="16" viewBox="0 0 16 16"><rect x="0.7" y="2.3" width="14.6" height="13" rx="2" fill="#fff" stroke="#1a1a1a" stroke-width="1.3"/><path d="M1 5.5H15" stroke="#1a1a1a" stroke-width="1"/><path d="M4.5 0.3V3M11 0.3V3" stroke="#1a1a1a" stroke-width="1.1"/><path d="M3 10.5H13M5.5 8V13M10.5 8V13" stroke="#37b4ea" stroke-width="1.1"/></svg><svg style="left:108px;top:508px" width="16" height="16" viewBox="0 0 16 16"><path d="M0.2 2.5H15.6" stroke="#1a1a1a" stroke-width="1.1"/><path d="M2 6.4H13.6" stroke="#37b4ea" stroke-width="1.1"/><path d="M4 10.3H11.6" stroke="#1a1a1a" stroke-width="1.1"/><path d="M6.2 14.4H9.7" stroke="#37b4ea" stroke-width="1.1"/></svg><svg style="left:140px;top:508px" width="16" height="16" viewBox="0 0 16 16"><polygon points="6.40,2.84 6.78,0.90 9.22,0.90 9.60,2.84 10.52,3.22 12.16,2.12 13.88,3.84 12.78,5.48 13.16,6.40 15.10,6.78 15.10,9.22 13.16,9.60 12.78,10.52 13.88,12.16 12.16,13.88 10.52,12.78 9.60,13.16 9.22,15.10 6.78,15.10 6.40,13.16 5.48,12.78 3.84,13.88 2.12,12.16 3.22,10.52 2.84,9.60 0.90,9.22 0.90,6.78 2.84,6.40 3.22,5.48 2.12,3.84 3.84,2.12 5.48,3.22" fill="#fff" stroke="#1a1a1a" stroke-width="1.1" stroke-linejoin="round"/><circle cx="8" cy="8" r="2.6" fill="none" stroke="#37b4ea" stroke-width="1.2"/></svg><svg style="left:172px;top:508px" width="16" height="16" viewBox="0 0 16 16"><text x="1.5" y="5" font-size="4.8" fill="#37b4ea" font-family="Liberation Sans" font-weight="bold" text-anchor="middle">1</text><text x="1.5" y="10.4" font-size="4.8" fill="#37b4ea" font-family="Liberation Sans" font-weight="bold" text-anchor="middle">2</text><text x="1.5" y="15.6" font-size="4.8" fill="#37b4ea" font-family="Liberation Sans" font-weight="bold" text-anchor="middle">3</text><path d="M6 2.5H14.5M6 8.5H14.5M6 14.3H14.5" stroke="#1a1a1a" stroke-width="1.1"/></svg><svg style="left:200px;top:508px" width="16" height="16" viewBox="0 0 16 16"><path d="M0.3 1.6H15.3M0.3 5.3H15.3M0.3 9.3H6M0.3 13.5H6" stroke="#1a1a1a" stroke-width="1.1"/><path d="M12 9V15M9 12H15" stroke="#37b4ea" stroke-width="1.1"/></svg><svg style="left:232px;top:508px" width="16" height="16" viewBox="0 0 16 16"><path d="M6 3H1.5A1 1 0 0 0 0.5 4V14A1 1 0 0 0 1.5 15H11.5A1 1 0 0 0 12.5 14V9" fill="none" stroke="#555" stroke-width="1.3"/><path d="M7.5 8.5L15 1M10 0.8H15.3V6" fill="none" stroke="#37b4ea" stroke-width="1.2"/></svg><svg style="left:264px;top:508px" width="16" height="16" viewBox="0 0 16 16"><path d="M2.5 12.5H0.5V3.5H11" fill="none" stroke="#1a1a1a" stroke-width="1.1"/><path d="M8.5 0.8L11.2 3.5L8.5 6.2" fill="none" stroke="#1a1a1a" stroke-width="1.1"/><path d="M12.6 3.5H15.5V12.5H5" fill="none" stroke="#37b4ea" stroke-width="1.1"/><path d="M7.5 9.8L4.8 12.5L7.5 15.2" fill="none" stroke="#37b4ea" stroke-width="1.1"/></svg><div class="btn" style="left:1280px;top:505px;width:100px;height:22px;"></div><svg style="left:1295px;top:511px" width="11" height="11" viewBox="0 0 11 11"><path d="M5.5 0.5V10.5M0.5 5.5H10.5" stroke="#333" stroke-width="1.5"/></svg><div class="t" style="left:1312px;top:509px;height:16px;line-height:16px;">Добавить</div><div class="btn" style="left:1384px;top:505px;width:113px;height:22px;"></div><svg style="left:1398px;top:509px" width="13" height="13" viewBox="0 0 13 13"><rect x="0.8" y="3.5" width="7.5" height="8.5" rx="1.3" fill="none" stroke="#666" stroke-width="1.2"/><rect x="4" y="0.5" width="8" height="8.5" rx="1.6" fill="#1a1a1a"/></svg><div class="t" style="left:1417px;top:509px;height:16px;line-height:16px;">Копировать</div><div style="left:14px;top:540px;width:2px;height:1px;background:#d8d8d8"></div><svg style="left:21px;top:536px" width="10" height="10" viewBox="0 0 10 10"><circle cx="4.5" cy="4.5" r="4.2" fill="none" stroke="#8f8f8f" stroke-width="0.9"/><path d="M2.5 4.5H6.5" stroke="#8f8f8f" stroke-width="0.9"/></svg><svg style="left:36px;top:535px" width="11" height="11" viewBox="0 0 11 11"><rect x="0.6" y="0.6" width="9.8" height="9.8" rx="1.5" fill="none" stroke="#8a8a8a" stroke-width="1.1"/><path d="M2.8 5.6L4.6 7.4L8.2 3.6" fill="none" stroke="#8a8a8a" stroke-width="1.1"/></svg><div class="t" style="left:53px;top:534px;height:16px;line-height:16px;color:#9b9b9b">Строка чека</div><div style="left:123px;top:540px;width:829px;height:1px;background:#d2d2d2"></div><div style="left:956px;top:530px;width:1px;height:314px;background:#d2d2d2"></div><div style="left:0;top:0;width:1505px;height:854px;clip-path:inset(555px 553px 39px 14px)"><div style="left:14px;top:555px;width:939px;height:260px;background:#fff;border:1px solid #8fc3da;border-radius:4px"></div><div style="left:15px;top:556px;width:937px;height:54px;background:#f2f2f2;border-radius:3px 3px 0 0"></div><div style="left:15px;top:653px;width:937px;height:21px;background:#d4e3e8"></div><div style="left:15px;top:610px;width:937px;height:1px;background:#e3e3e3"></div><div style="left:15px;top:631px;width:937px;height:1px;background:#e3e3e3"></div><div style="left:15px;top:652px;width:937px;height:1px;background:#e3e3e3"></div><div style="left:15px;top:673px;width:937px;height:1px;background:#e3e3e3"></div><div style="left:86px;top:556px;width:1px;height:118px;background:#e3e3e3"></div><div style="left:184px;top:556px;width:1px;height:118px;background:#e3e3e3"></div><div style="left:256px;top:556px;width:1px;height:118px;background:#e3e3e3"></div><div style="left:392px;top:556px;width:1px;height:118px;background:#e3e3e3"></div><div style="left:496px;top:556px;width:1px;height:118px;background:#e3e3e3"></div><div style="left:568px;top:556px;width:1px;height:118px;background:#e3e3e3"></div><div style="left:640px;top:556px;width:1px;height:118px;background:#e3e3e3"></div><div style="left:699px;top:556px;width:1px;height:118px;background:#e3e3e3"></div><div style="left:758px;top:556px;width:1px;height:118px;background:#e3e3e3"></div><div style="left:804px;top:556px;width:1px;height:118px;background:#e3e3e3"></div><div style="left:863px;top:556px;width:1px;height:118px;background:#e3e3e3"></div><div style="left:896px;top:556px;width:1px;height:118px;background:#e3e3e3"></div><div class="t" style="left:19px;top:614px;height:17px;line-height:17px;width:66px;">Продажа</div><div class="t" style="left:90px;top:614px;height:17px;line-height:17px;width:93px;letter-spacing:-0.35px;">4820008091468</div><div class="t" style="left:188px;top:614px;height:17px;line-height:17px;width:67px;letter-spacing:-0.35px;">45</div><div class="t" style="left:260px;top:614px;height:17px;line-height:17px;width:131px;letter-spacing:-0.6px">АДЖИКА ВЕРЕС ОСТРАЯ </div><div class="t" style="left:497px;top:614px;height:17px;line-height:17px;width:68px;letter-spacing:-0.35px;text-align:right">1</div><div class="t" style="left:641px;top:614px;height:17px;line-height:17px;width:55px;letter-spacing:-0.35px;text-align:right">2,79</div><div class="t" style="left:700px;top:614px;height:17px;line-height:17px;width:55px;letter-spacing:-0.35px;text-align:right">2,79</div><div class="t" style="left:864px;top:614px;height:17px;line-height:17px;width:29px;letter-spacing:-0.35px;text-align:right">5</div><div class="t" style="left:897px;top:614px;height:17px;line-height:17px;width:64px;letter-spacing:-0.35px;text-align:right">20</div><div class="t" style="left:19px;top:635px;height:17px;line-height:17px;width:66px;">Продажа</div><div class="t" style="left:90px;top:635px;height:17px;line-height:17px;width:93px;letter-spacing:-0.35px;">2900000203006</div><div class="t" style="left:188px;top:635px;height:17px;line-height:17px;width:67px;letter-spacing:-0.35px;">101001</div><div class="t" style="left:260px;top:635px;height:17px;line-height:17px;width:131px;">Ботинки мужские Осенние</div><div class="t" style="left:497px;top:635px;height:17px;line-height:17px;width:68px;letter-spacing:-0.35px;text-align:right">1</div><div class="t" style="left:641px;top:635px;height:17px;line-height:17px;width:55px;letter-spacing:-0.35px;text-align:right">3 500</div><div class="t" style="left:700px;top:635px;height:17px;line-height:17px;width:55px;letter-spacing:-0.35px;text-align:right">3 500</div><div class="t" style="left:864px;top:635px;height:17px;line-height:17px;width:29px;letter-spacing:-0.35px;text-align:right">5</div><div class="t" style="left:897px;top:635px;height:17px;line-height:17px;width:64px;letter-spacing:-0.35px;text-align:right">20</div><div class="t" style="left:19px;top:656px;height:17px;line-height:17px;width:66px;">Продажа</div><div style="left:15px;top:556px;width:71px;height:54px;overflow:hidden"><div class="t" style="left:27.5px;top:11.0px;height:14px;line-height:14px;width:16px;font-size:9px;color:#333;text-align:center">Aa</div><div class="t" style="left:0;width:71px;top:30.0px;height:16px;line-height:16px;text-align:center;color:#1b1b1b">Тип</div></div><div style="left:86px;top:556px;width:98px;height:54px;overflow:hidden"><svg style="left:42.0px;top:12.0px" width="14" height="13" viewBox="0 0 14 13"><path d="M3 0.5H0.5V3M11 0.5H13.5V3M3 12.5H0.5V10M11 12.5H13.5V10" fill="none" stroke="#333" stroke-width="1"/><path d="M3.5 3V10M5.5 3V10M7.5 3V10M9.5 3V10" stroke="#333" stroke-width="1.1"/></svg><div class="t" style="left:0;width:98px;top:30.0px;height:16px;line-height:16px;text-align:center;color:#1b1b1b">Штрихкод</div></div><svg style="left:179px;top:605px" width="5" height="5" viewBox="0 0 5 5"><path d="M5 0V5H0Z" fill="#1a8fd0"/></svg><div style="left:184px;top:556px;width:72px;height:54px;overflow:hidden"><div class="t" style="left:0;width:72px;top:20.0px;height:16px;line-height:16px;text-align:center;color:#1b1b1b">Код</div></div><svg style="left:251px;top:605px" width="5" height="5" viewBox="0 0 5 5"><path d="M5 0V5H0Z" fill="#1a8fd0"/></svg><div style="left:256px;top:556px;width:136px;height:54px;overflow:hidden"><svg style="left:63.0px;top:11.0px" width="10" height="13" viewBox="0 0 10 13"><rect x="1.5" y="0.8" width="7" height="11.4" rx="2" fill="none" stroke="#333" stroke-width="1"/><path d="M3.5 3.5H6.5M3.5 6.5H6.5M3.5 9.5H6.5" stroke="#333" stroke-width="1"/><path d="M0 5.5H1.5M8.5 5.5H10M0 7.5H1.5M8.5 7.5H10" stroke="#333" stroke-width="0.8"/></svg><div class="t" style="left:0;width:136px;top:30.0px;height:16px;line-height:16px;text-align:center;color:#1b1b1b">Товар</div></div><svg style="left:387px;top:605px" width="5" height="5" viewBox="0 0 5 5"><path d="M5 0V5H0Z" fill="#1a8fd0"/></svg><div style="left:392px;top:556px;width:104px;height:54px;overflow:hidden"><svg style="left:46.0px;top:11.0px" width="12" height="13" viewBox="0 0 12 13"><path d="M1.5 11.5V0.5H10.5V11.5" fill="#fff" stroke="#333" stroke-width="1"/><path d="M0.5 12H11.5" stroke="#333" stroke-width="1.3"/><path d="M3 3.5H6.5M8 3.5H9M3 6.5H6.5M8 6.5H9M3 9.5H6.5M8 9.5H9" stroke="#333" stroke-width="1.1"/></svg><div class="t" style="left:0;width:104px;top:30.0px;height:16px;line-height:16px;text-align:center;color:#1b1b1b">Чек продажи</div></div><svg style="left:491px;top:605px" width="5" height="5" viewBox="0 0 5 5"><path d="M5 0V5H0Z" fill="#1a8fd0"/></svg><div style="left:496px;top:556px;width:72px;height:54px;overflow:hidden"><svg style="left:30.0px;top:10.5px" width="14" height="12" viewBox="0 0 14 12"><path d="M3 0.3V9" stroke="#1a1a1a" stroke-width="1.6"/><path d="M0 7L3 11.6L6 7Z" fill="#1a1a1a"/><rect x="6.8" y="0.6" width="6.6" height="2" fill="#1a1a1a"/><rect x="6.8" y="3.6" width="4.8" height="2" fill="#1a1a1a"/><rect x="6.8" y="6.6" width="3" height="1.9" fill="#1a1a1a"/><rect x="6.8" y="9.6" width="1.8" height="1.8" fill="#1a1a1a"/></svg><div class="t" style="left:0;width:72px;top:28.0px;height:16px;line-height:16px;text-align:center;color:#1b1b1b">Количество</div></div><svg style="left:563px;top:605px" width="5" height="5" viewBox="0 0 5 5"><path d="M5 0V5H0Z" fill="#1a8fd0"/></svg><div style="left:568px;top:556px;width:72px;height:54px;overflow:hidden"><svg style="left:30.0px;top:4.5px" width="13" height="10" viewBox="0 0 13 10"><path d="M12 0.5V5.5H1.5" fill="none" stroke="#444" stroke-width="1"/><path d="M4.5 2.5L1.5 5.5L4.5 8.5" fill="none" stroke="#444" stroke-width="1"/></svg><div class="t" style="left:0;width:72px;top:22.0px;height:16px;line-height:16px;text-align:center;color:#1b1b1b">Возвращен</div><div class="t" style="left:0;width:72px;top:38.0px;height:16px;line-height:16px;text-align:center;color:#1b1b1b">о</div></div><div style="left:640px;top:556px;width:59px;height:54px;overflow:hidden"><svg style="left:23.5px;top:11.0px" width="13" height="13" viewBox="0 0 13 13"><path d="M1 1.5H5.5L12 8L7.5 12.5L1 6Z" fill="none" stroke="#444" stroke-width="1"/><path d="M3 0.5H7L13 6.5" fill="none" stroke="#444" stroke-width="0.9"/><circle cx="3.5" cy="4" r="0.9" fill="#444"/></svg><div class="t" style="left:0;width:59px;top:29.0px;height:16px;line-height:16px;text-align:center;color:#1b1b1b">Цена</div></div><svg style="left:694px;top:605px" width="5" height="5" viewBox="0 0 5 5"><path d="M5 0V5H0Z" fill="#1a8fd0"/></svg><div style="left:699px;top:556px;width:59px;height:54px;overflow:hidden"><svg style="left:23.5px;top:11.0px" width="13" height="13" viewBox="0 0 13 13"><path d="M1 3H5M3 1V5M8 10.5H12M2 11.5L11 2.5" stroke="#555" stroke-width="1"/></svg><div class="t" style="left:0;width:59px;top:30.0px;height:16px;line-height:16px;text-align:center;color:#1b1b1b">Сумма</div></div><svg style="left:753px;top:605px" width="5" height="5" viewBox="0 0 5 5"><path d="M5 0V5H0Z" fill="#1a8fd0"/></svg><div style="left:758px;top:556px;width:46px;height:54px;overflow:hidden"><div class="t" style="left:17.0px;top:-2.0px;height:12px;line-height:12px;width:12px;font-size:10px;color:#444;text-align:center">%</div><div class="t" style="left:0;width:46px;top:14.0px;height:16px;line-height:16px;text-align:center;color:#1b1b1b">Проце</div><div class="t" style="left:0;width:46px;top:30.0px;height:16px;line-height:16px;text-align:center;color:#1b1b1b">нт</div><div class="t" style="left:0;width:46px;top:46.0px;height:16px;line-height:16px;text-align:center;color:#1b1b1b">скидки</div></div><svg style="left:799px;top:605px" width="5" height="5" viewBox="0 0 5 5"><path d="M5 0V5H0Z" fill="#1a8fd0"/></svg><div style="left:804px;top:556px;width:59px;height:54px;overflow:hidden"><svg style="left:23.5px;top:3.0px" width="14" height="12" viewBox="0 0 14 12"><path d="M1 1.5H6L12 7.5L8 11.5L1 5Z" fill="#1a1a1a"/><path d="M3 0.5H7.5L13.5 6.5" fill="none" stroke="#1a1a1a" stroke-width="1"/><circle cx="3.3" cy="3.6" r="1" fill="#fff"/></svg><div class="t" style="left:0;width:59px;top:21.0px;height:16px;line-height:16px;text-align:center;color:#1b1b1b">Сумма</div><div class="t" style="left:0;width:59px;top:37.0px;height:16px;line-height:16px;text-align:center;color:#1b1b1b">скидки</div></div><svg style="left:858px;top:605px" width="5" height="5" viewBox="0 0 5 5"><path d="M5 0V5H0Z" fill="#1a8fd0"/></svg><div style="left:863px;top:556px;width:33px;height:54px;overflow:hidden"><div class="t" style="left:8.5px;top:-5.0px;height:12px;line-height:12px;width:16px;letter-spacing:-0.35px;font-size:8.2px;color:#444;text-align:center">123</div><div class="t" style="left:0;width:33px;top:14.0px;height:16px;line-height:16px;text-align:center;color:#1b1b1b">НДС,</div><div class="t" style="left:0;width:33px;top:30.0px;height:16px;line-height:16px;text-align:center;color:#1b1b1b">ном</div><div class="t" style="left:0;width:33px;top:46.0px;height:16px;line-height:16px;text-align:center;color:#1b1b1b">ер</div></div><svg style="left:891px;top:605px" width="5" height="5" viewBox="0 0 5 5"><path d="M5 0V5H0Z" fill="#1a8fd0"/></svg><div style="left:896px;top:556px;width:68px;height:54px;overflow:hidden"><div class="t" style="left:0;width:68px;top:20.0px;height:16px;line-height:16px;text-align:center;color:#1b1b1b">НДС, %</div></div><div style="left:32px;top:799px;width:653px;height:13px;background:#dadada"></div><svg style="left:20px;top:801px" width="6" height="9" viewBox="0 0 6 9"><path d="M5 0.5V8.5L0.5 4.5Z" fill="#d0d0d0"/></svg><svg style="left:941px;top:801px" width="6" height="9" viewBox="0 0 6 9"><path d="M0.5 0.5V8.5L5 4.5Z" fill="#d0d0d0"/></svg></div><div style="left:14px;top:555px;width:939px;height:260px;border:1px solid #8fc3da;border-radius:4px"></div><div style="left:14px;top:819px;width:28px;height:22px;background:#d4e3e8;border-radius:4px"></div><svg style="left:20px;top:822px" width="16" height="16" viewBox="0 0 16 16"><circle cx="2.3" cy="3" r="1.6" fill="none" stroke="#37b4ea" stroke-width="1.1"/><circle cx="2.3" cy="8" r="1.6" fill="none" stroke="#37b4ea" stroke-width="1.1"/><circle cx="2.3" cy="13" r="1.6" fill="none" stroke="#37b4ea" stroke-width="1.1"/><path d="M6 3H15M6 8H15M6 13H15" stroke="#1a1a1a" stroke-width="1.2"/></svg><svg style="left:48px;top:822px" width="16" height="16" viewBox="0 0 16 16"><rect x="0.7" y="0.7" width="14.6" height="14.6" rx="1" fill="#fff" stroke="#1a1a1a" stroke-width="1.3"/><path d="M5.5 1V15M10.5 1V15M1 5.5H15M1 10.5H15" stroke="#37b4ea" stroke-width="1.1"/></svg><svg style="left:80px;top:822px" width="16" height="16" viewBox="0 0 16 16"><path d="M0.2 2.5H15.6" stroke="#1a1a1a" stroke-width="1.1"/><path d="M2 6.4H13.6" stroke="#37b4ea" stroke-width="1.1"/><path d="M4 10.3H11.6" stroke="#1a1a1a" stroke-width="1.1"/><path d="M6.2 14.4H9.7" stroke="#37b4ea" stroke-width="1.1"/></svg><svg style="left:112px;top:822px" width="16" height="16" viewBox="0 0 16 16"><polygon points="6.40,2.84 6.78,0.90 9.22,0.90 9.60,2.84 10.52,3.22 12.16,2.12 13.88,3.84 12.78,5.48 13.16,6.40 15.10,6.78 15.10,9.22 13.16,9.60 12.78,10.52 13.88,12.16 12.16,13.88 10.52,12.78 9.60,13.16 9.22,15.10 6.78,15.10 6.40,13.16 5.48,12.78 3.84,13.88 2.12,12.16 3.22,10.52 2.84,9.60 0.90,9.22 0.90,6.78 2.84,6.40 3.22,5.48 2.12,3.84 3.84,2.12 5.48,3.22" fill="#fff" stroke="#1a1a1a" stroke-width="1.1" stroke-linejoin="round"/><circle cx="8" cy="8" r="2.6" fill="none" stroke="#37b4ea" stroke-width="1.2"/></svg><svg style="left:144px;top:822px" width="16" height="16" viewBox="0 0 16 16"><text x="1.5" y="5" font-size="4.8" fill="#37b4ea" font-family="Liberation Sans" font-weight="bold" text-anchor="middle">1</text><text x="1.5" y="10.4" font-size="4.8" fill="#37b4ea" font-family="Liberation Sans" font-weight="bold" text-anchor="middle">2</text><text x="1.5" y="15.6" font-size="4.8" fill="#37b4ea" font-family="Liberation Sans" font-weight="bold" text-anchor="middle">3</text><path d="M6 2.5H14.5M6 8.5H14.5M6 14.3H14.5" stroke="#1a1a1a" stroke-width="1.1"/></svg><svg style="left:172px;top:822px" width="16" height="16" viewBox="0 0 16 16"><path d="M0.3 1.6H15.3M0.3 5.3H15.3M0.3 9.3H6M0.3 13.5H6" stroke="#1a1a1a" stroke-width="1.1"/><path d="M12 9V15M9 12H15" stroke="#37b4ea" stroke-width="1.1"/></svg><svg style="left:204px;top:822px" width="16" height="16" viewBox="0 0 16 16"><path d="M6 3H1.5A1 1 0 0 0 0.5 4V14A1 1 0 0 0 1.5 15H11.5A1 1 0 0 0 12.5 14V9" fill="none" stroke="#555" stroke-width="1.3"/><path d="M7.5 8.5L15 1M10 0.8H15.3V6" fill="none" stroke="#37b4ea" stroke-width="1.2"/></svg><svg style="left:236px;top:822px" width="16" height="16" viewBox="0 0 16 16"><path d="M2.5 12.5H0.5V3.5H11" fill="none" stroke="#1a1a1a" stroke-width="1.1"/><path d="M8.5 0.8L11.2 3.5L8.5 6.2" fill="none" stroke="#1a1a1a" stroke-width="1.1"/><path d="M12.6 3.5H15.5V12.5H5" fill="none" stroke="#37b4ea" stroke-width="1.1"/><path d="M7.5 9.8L4.8 12.5L7.5 15.2" fill="none" stroke="#37b4ea" stroke-width="1.1"/></svg><div style="left:12px;top:845px;width:1489px;height:1px;background:#d2d2d2"></div><div class="btn" style="left:453px;top:819px;width:198px;height:22px;"></div><svg style="left:468px;top:824px" width="12" height="13" viewBox="0 0 12 13"><path d="M1.5 11.5V0.5H10.5V11.5" fill="#fff" stroke="#333" stroke-width="1"/><path d="M0.5 12H11.5" stroke="#333" stroke-width="1.3"/><path d="M3 3.5H6.5M8 3.5H9M3 6.5H6.5M8 6.5H9M3 9.5H6.5M8 9.5H9" stroke="#333" stroke-width="1.1"/></svg><div class="t" style="left:486px;top:823px;height:16px;line-height:16px;">Подбор товаров (продажа)</div><div class="btn" style="left:655px;top:819px;width:193px;height:22px;"></div><svg style="left:670px;top:826px" width="13" height="10" viewBox="0 0 13 10"><path d="M12 0.5V5.5H1.5" fill="none" stroke="#333" stroke-width="1"/><path d="M4.5 2.5L1.5 5.5L4.5 8.5" fill="none" stroke="#333" stroke-width="1"/></svg><div class="t" style="left:688px;top:823px;height:16px;line-height:16px;">Подбор товаров (возврат)</div><div class="btn" style="left:852px;top:819px;width:101px;height:22px;background:#d4e3e8;border-color:#3f8fbf"></div><svg style="left:868px;top:825px" width="11" height="11" viewBox="0 0 11 11"><path d="M5.5 0.5V10.5M0.5 5.5H10.5" stroke="#333" stroke-width="1.5"/></svg><div class="t" style="left:885px;top:823px;height:16px;line-height:16px;">Добавить</div><div style="left:962px;top:531px;width:123px;height:22px;background:#d4e3e8;border:1px solid #cfcfcf;border-bottom:none;border-radius:4px 4px 0 0"></div><div style="left:1088px;top:531px;width:124px;height:22px;background:#f2f2f2;border:1px solid #cfcfcf;border-bottom:none;border-radius:4px 4px 0 0"></div><div style="left:959px;top:552px;width:542px;height:1px;background:#d0d0d0"></div><svg style="left:973px;top:536px" width="11" height="11" viewBox="0 0 11 11"><rect x="0.6" y="0.6" width="9.8" height="9.8" rx="1.5" fill="none" stroke="#333" stroke-width="1.1"/><path d="M2.8 5.6L4.6 7.4L8.2 3.6" fill="none" stroke="#333" stroke-width="1.1"/></svg><div class="t" style="left:990px;top:535px;height:16px;line-height:16px;">Оплата по чеку</div><div class="t" style="left:1099px;top:535px;height:16px;line-height:16px;font-size:12.1px">Возможные акции</div><div style="left:961px;top:557px;width:536px;height:258px;background:#fff;border:1px solid #c6c6c6;border-radius:4px"></div><div style="left:962px;top:558px;width:534px;height:36px;background:#f2f2f2;border-radius:3px 3px 0 0"></div><div style="left:962px;top:594px;width:534px;height:21px;background:#d4e3e8"></div><div style="left:962px;top:594px;width:534px;height:1px;background:#e3e3e3"></div><div style="left:962px;top:615px;width:534px;height:1px;background:#e3e3e3"></div><div style="left:1087px;top:558px;width:1px;height:57px;background:#e3e3e3"></div><div style="left:1218px;top:558px;width:1px;height:57px;background:#e3e3e3"></div><div style="left:1348px;top:558px;width:1px;height:57px;background:#e3e3e3"></div><div style="left:1441px;top:558px;width:1px;height:57px;background:#e3e3e3"></div><div style="left:962px;top:558px;width:125px;height:36px;overflow:hidden"><svg style="left:56.5px;top:2.5px" width="13" height="10" viewBox="0 0 13 10"><rect x="0.5" y="1" width="12" height="8.5" rx="1" fill="#1a1a1a"/><path d="M1 2L6.5 6L12 2" fill="none" stroke="#fff" stroke-width="1"/></svg><div class="t" style="left:0;width:125px;top:21.0px;height:16px;line-height:16px;text-align:center;color:#1b1b1b">Тип платежа</div></div><svg style="left:1082px;top:589px" width="5" height="5" viewBox="0 0 5 5"><path d="M5 0V5H0Z" fill="#1a8fd0"/></svg><div style="left:1087px;top:558px;width:131px;height:36px;overflow:hidden"><svg style="left:59.5px;top:4.0px" width="13" height="13" viewBox="0 0 13 13"><rect x="0.8" y="3.5" width="7.5" height="8.5" rx="1.3" fill="none" stroke="#666" stroke-width="1.2"/><rect x="4" y="0.5" width="8" height="8.5" rx="1.6" fill="#1a1a1a"/></svg><div class="t" style="left:0;width:131px;top:19.5px;height:16px;line-height:16px;text-align:center;color:#1b1b1b">Форма оплаты</div></div><svg style="left:1213px;top:589px" width="5" height="5" viewBox="0 0 5 5"><path d="M5 0V5H0Z" fill="#1a8fd0"/></svg><div style="left:1218px;top:558px;width:130px;height:36px;overflow:hidden"><svg style="left:59.0px;top:2.5px" width="13" height="10" viewBox="0 0 13 10"><rect x="0.5" y="1" width="12" height="8.5" rx="1" fill="#1a1a1a"/><path d="M1 2L6.5 6L12 2" fill="none" stroke="#fff" stroke-width="1"/></svg><div class="t" style="left:0;width:130px;top:21.0px;height:16px;line-height:16px;text-align:center;color:#1b1b1b">Сумма платежа</div></div><svg style="left:1343px;top:589px" width="5" height="5" viewBox="0 0 5 5"><path d="M5 0V5H0Z" fill="#1a8fd0"/></svg><div style="left:1348px;top:558px;width:93px;height:36px;overflow:hidden"><div class="t" style="left:38.5px;top:1.5px;height:12px;line-height:12px;width:16px;letter-spacing:-0.35px;font-size:8.2px;color:#444;text-align:center">123</div><div class="t" style="left:0;width:93px;top:21.0px;height:16px;line-height:16px;text-align:center;color:#1b1b1b">Серия/Номер</div></div><svg style="left:1436px;top:589px" width="5" height="5" viewBox="0 0 5 5"><path d="M5 0V5H0Z" fill="#1a8fd0"/></svg><div style="left:1441px;top:558px;width:55px;height:36px;overflow:hidden"><div class="t" style="left:0;width:55px;top:11.0px;height:16px;line-height:16px;text-align:center;color:#1b1b1b">Удалить</div></div><svg style="left:1491px;top:589px" width="5" height="5" viewBox="0 0 5 5"><path d="M5 0V5H0Z" fill="#1a8fd0"/></svg><div class="t" style="left:963px;top:598px;height:17px;line-height:17px;">Карточка</div><div class="t" style="left:1090px;top:598px;height:17px;line-height:17px;">Карточка</div><div class="t" style="left:1220px;top:598px;height:17px;line-height:17px;width:125px;letter-spacing:-0.35px;text-align:right">3 502,79</div><div style="left:1443px;top:597px;width:51px;height:17px;background:#fff;border:1px solid #c9c9c9;border-radius:3px"></div><div style="left:1463px;top:605px;width:11px;height:1px;background:#666"></div><div style="left:961px;top:819px;width:28px;height:22px;background:#d4e3e8;border-radius:4px"></div><svg style="left:967px;top:822px" width="16" height="16" viewBox="0 0 16 16"><circle cx="2.3" cy="3" r="1.6" fill="none" stroke="#37b4ea" stroke-width="1.1"/><circle cx="2.3" cy="8" r="1.6" fill="none" stroke="#37b4ea" stroke-width="1.1"/><circle cx="2.3" cy="13" r="1.6" fill="none" stroke="#37b4ea" stroke-width="1.1"/><path d="M6 3H15M6 8H15M6 13H15" stroke="#1a1a1a" stroke-width="1.2"/></svg><svg style="left:995px;top:822px" width="16" height="16" viewBox="0 0 16 16"><rect x="0.7" y="0.7" width="14.6" height="14.6" rx="1" fill="#fff" stroke="#1a1a1a" stroke-width="1.3"/><path d="M5.5 1V15M10.5 1V15M1 5.5H15M1 10.5H15" stroke="#37b4ea" stroke-width="1.1"/></svg><svg style="left:1027px;top:822px" width="16" height="16" viewBox="0 0 16 16"><path d="M0.2 2.5H15.6" stroke="#1a1a1a" stroke-width="1.1"/><path d="M2 6.4H13.6" stroke="#37b4ea" stroke-width="1.1"/><path d="M4 10.3H11.6" stroke="#1a1a1a" stroke-width="1.1"/><path d="M6.2 14.4H9.7" stroke="#37b4ea" stroke-width="1.1"/></svg><svg style="left:1059px;top:822px" width="16" height="16" viewBox="0 0 16 16"><polygon points="6.40,2.84 6.78,0.90 9.22,0.90 9.60,2.84 10.52,3.22 12.16,2.12 13.88,3.84 12.78,5.48 13.16,6.40 15.10,6.78 15.10,9.22 13.16,9.60 12.78,10.52 13.88,12.16 12.16,13.88 10.52,12.78 9.60,13.16 9.22,15.10 6.78,15.10 6.40,13.16 5.48,12.78 3.84,13.88 2.12,12.16 3.22,10.52 2.84,9.60 0.90,9.22 0.90,6.78 2.84,6.40 3.22,5.48 2.12,3.84 3.84,2.12 5.48,3.22" fill="#fff" stroke="#1a1a1a" stroke-width="1.1" stroke-linejoin="round"/><circle cx="8" cy="8" r="2.6" fill="none" stroke="#37b4ea" stroke-width="1.2"/></svg><svg style="left:1091px;top:822px" width="16" height="16" viewBox="0 0 16 16"><text x="1.5" y="5" font-size="4.8" fill="#37b4ea" font-family="Liberation Sans" font-weight="bold" text-anchor="middle">1</text><text x="1.5" y="10.4" font-size="4.8" fill="#37b4ea" font-family="Liberation Sans" font-weight="bold" text-anchor="middle">2</text><text x="1.5" y="15.6" font-size="4.8" fill="#37b4ea" font-family="Liberation Sans" font-weight="bold" text-anchor="middle">3</text><path d="M6 2.5H14.5M6 8.5H14.5M6 14.3H14.5" stroke="#1a1a1a" stroke-width="1.1"/></svg><svg style="left:1119px;top:822px" width="16" height="16" viewBox="0 0 16 16"><path d="M0.3 1.6H15.3M0.3 5.3H15.3M0.3 9.3H6M0.3 13.5H6" stroke="#1a1a1a" stroke-width="1.1"/><path d="M12 9V15M9 12H15" stroke="#37b4ea" stroke-width="1.1"/></svg><svg style="left:1151px;top:822px" width="16" height="16" viewBox="0 0 16 16"><path d="M6 3H1.5A1 1 0 0 0 0.5 4V14A1 1 0 0 0 1.5 15H11.5A1 1 0 0 0 12.5 14V9" fill="none" stroke="#555" stroke-width="1.3"/><path d="M7.5 8.5L15 1M10 0.8H15.3V6" fill="none" stroke="#37b4ea" stroke-width="1.2"/></svg><svg style="left:1183px;top:822px" width="16" height="16" viewBox="0 0 16 16"><path d="M2.5 12.5H0.5V3.5H11" fill="none" stroke="#1a1a1a" stroke-width="1.1"/><path d="M8.5 0.8L11.2 3.5L8.5 6.2" fill="none" stroke="#1a1a1a" stroke-width="1.1"/><path d="M12.6 3.5H15.5V12.5H5" fill="none" stroke="#37b4ea" stroke-width="1.1"/><path d="M7.5 9.8L4.8 12.5L7.5 15.2" fill="none" stroke="#37b4ea" stroke-width="1.1"/></svg><div class="btn" style="left:1272px;top:819px;width:101px;height:22px;"></div><svg style="left:1287px;top:825px" width="11" height="11" viewBox="0 0 11 11"><path d="M5.5 0.5V10.5M0.5 5.5H10.5" stroke="#333" stroke-width="1.5"/></svg><div class="t" style="left:1306px;top:823px;height:16px;line-height:16px;">Добавить</div><div class="btn" style="left:1377px;top:819px;width:120px;height:22px;"></div><svg style="left:1394px;top:827px" width="7" height="7" viewBox="0 0 7 7"><path d="M3.5 0.5V6.5M0.5 3.5H6.5" stroke="#666" stroke-width="1.1"/></svg><div class="t" style="left:1410px;top:823px;height:16px;line-height:16px;">Добавить ПС</div><div style="left:1074px;top:850px;width:41px;height:12px;background:#fff;border:1px solid #c6c6c6;border-radius:4px"></div><div style="left:1120px;top:850px;width:106px;height:12px;background:#fff;border:1px solid #c6c6c6;border-radius:4px"></div><div style="left:1230px;top:850px;width:102px;height:12px;background:#fff;border:1px solid #c6c6c6;border-radius:4px"></div><div style="left:1336px;top:850px;width:64px;height:12px;background:#fff;border:1px solid #c6c6c6;border-radius:4px"></div><div style="left:1404px;top:850px;width:93px;height:12px;background:#fff;border:1px solid #c6c6c6;border-radius:4px"></div><svg style="left:0px;top:0px" width="1505" height="854" viewBox="0 0 1505 854"><path d="M256 756L154.6 669.1" stroke="#f00" stroke-width="3"/><path d="M144 660L158.2 664.9L151.1 673.3Z" fill="#f00"/><path d="M256 756L318.4 676.0" stroke="#f00" stroke-width="3"/><path d="M327 665L322.7 679.4L314.1 672.7Z" fill="#f00"/><path d="M259 759L538.7 670.2" stroke="#f00" stroke-width="3"/><path d="M552 666L540.3 675.5L537.0 665.0Z" fill="#f00"/><path d="M259 759L678.3 665.1" stroke="#f00" stroke-width="3"/><path d="M692 662L679.5 670.4L677.1 659.7Z" fill="#f00"/></svg></body></html>
